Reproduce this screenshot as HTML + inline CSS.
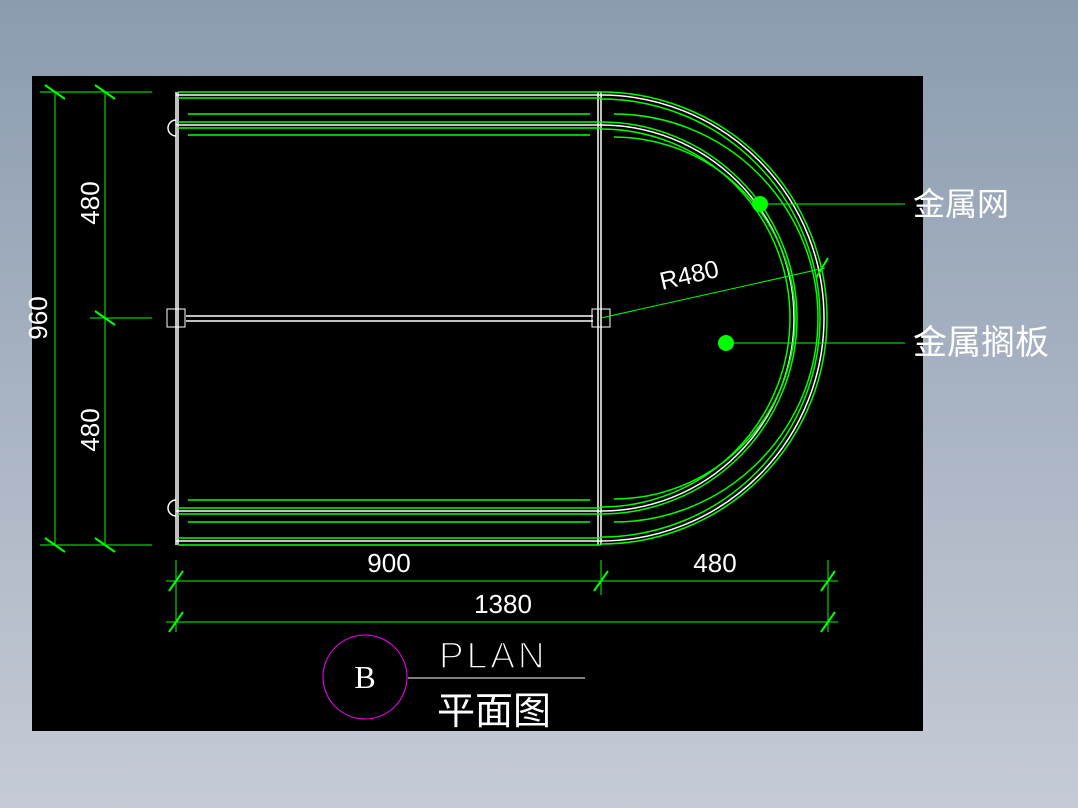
<!DOCTYPE html><html><head><style>body{margin:0;width:1078px;height:808px;background:linear-gradient(#8b9caf,#c6cbd6);overflow:hidden}svg{position:absolute;left:0;top:0}</style></head><body>
<svg width="1078" height="808" font-family="Liberation Sans, Noto Sans CJK SC, sans-serif">
<rect x="32" y="76" width="891" height="655" fill="#000"/>
<g fill="none" stroke-width="1.5">
<g stroke="#fff">
<line x1="176" y1="92" x2="176" y2="545"/><line x1="178" y1="92" x2="178" y2="545"/>
<line x1="598" y1="92" x2="598" y2="545"/><line x1="601" y1="92" x2="601" y2="545"/>
<line x1="176" y1="95" x2="601" y2="95"/><line x1="176" y1="125" x2="601" y2="125"/>
<line x1="176" y1="541" x2="601" y2="541"/><line x1="176" y1="511" x2="601" y2="511"/>
<line x1="186" y1="316" x2="593" y2="316"/><line x1="186" y1="321" x2="593" y2="321"/>
<path d="M176 120 A8 8 0 0 0 176 136"/><path d="M176 500 A8 8 0 0 0 176 516"/>
<rect x="167" y="309" width="18" height="18" stroke-width="1"/><rect x="592" y="309" width="18" height="18" stroke-width="1"/>
</g>
<g stroke="#0f0">
<line x1="178" y1="92" x2="601" y2="92"/><line x1="178" y1="98" x2="601" y2="98"/>
<line x1="178" y1="122" x2="601" y2="122"/><line x1="178" y1="128" x2="601" y2="128"/>
<line x1="188" y1="114" x2="590" y2="114"/><line x1="188" y1="135" x2="590" y2="135"/>
<line x1="178" y1="545" x2="601" y2="545"/><line x1="178" y1="538" x2="601" y2="538"/>
<line x1="178" y1="514" x2="601" y2="514"/><line x1="178" y1="508" x2="601" y2="508"/>
<line x1="188" y1="500" x2="590" y2="500"/><line x1="188" y1="522" x2="590" y2="522"/>
</g>
<path stroke="#0f0" d="M601 92 A226 226 0 0 1 601 544"/>
<path stroke="#fff" d="M601 95 A223 223 0 0 1 601 541"/>
<path stroke="#0f0" d="M601 99 A219 219 0 0 1 601 537"/>
<path stroke="#0f0" d="M614 114 A204 204 0 0 1 614 522"/>
<path stroke="#0f0" d="M601 122 A196 196 0 0 1 601 514"/>
<path stroke="#fff" d="M601 125 A193 193 0 0 1 601 511"/>
<path stroke="#0f0" d="M601 129 A189 189 0 0 1 601 507"/>
<path stroke="#0f0" d="M614 137 A181 181 0 0 1 614 499"/>
<g stroke="#0f0" stroke-width="1">
<line x1="601" y1="318" x2="825" y2="268"/><line x1="816" y1="278" x2="828" y2="258" stroke-width="2"/>
<line x1="760" y1="204" x2="905" y2="204"/><line x1="726" y1="343" x2="905" y2="343"/>
<line x1="55" y1="92" x2="55" y2="545"/><line x1="105" y1="92" x2="105" y2="545"/>
<line x1="40" y1="92" x2="152" y2="92"/><line x1="90" y1="318" x2="152" y2="318"/><line x1="40" y1="545" x2="152" y2="545"/>
<line x1="176" y1="560" x2="176" y2="632"/><line x1="601" y1="560" x2="601" y2="595"/><line x1="828" y1="560" x2="828" y2="632"/>
<line x1="166" y1="581" x2="838" y2="581"/><line x1="166" y1="622" x2="838" y2="622"/>
</g>
<g stroke="#0f0" stroke-width="2">
<line x1="45" y1="85" x2="65" y2="99"/><line x1="95" y1="85" x2="115" y2="99"/>
<line x1="95" y1="311" x2="115" y2="325"/>
<line x1="45" y1="538" x2="65" y2="552"/><line x1="95" y1="538" x2="115" y2="552"/>
<line x1="169" y1="591" x2="183" y2="571"/><line x1="594" y1="591" x2="608" y2="571"/><line x1="821" y1="591" x2="835" y2="571"/>
<line x1="169" y1="632" x2="183" y2="612"/><line x1="821" y1="632" x2="835" y2="612"/>
</g>
<circle cx="365" cy="677" r="42" stroke="#f0f" stroke-width="1"/>
<line x1="408" y1="678" x2="585" y2="678" stroke="#fff" stroke-width="1"/>
</g>
<circle cx="760" cy="204" r="8" fill="#0f0"/><circle cx="726" cy="343" r="8" fill="#0f0"/>
<g fill="#fff" font-size="26">
<text x="389" y="572" text-anchor="middle">900</text>
<text x="715" y="572" text-anchor="middle">480</text>
<text x="503" y="613" text-anchor="middle">1380</text>
<text transform="translate(99,203) rotate(-90)" text-anchor="middle">480</text>
<text transform="translate(99,430) rotate(-90)" text-anchor="middle">480</text>
<text transform="translate(47,318) rotate(-90)" text-anchor="middle">960</text>
<text transform="translate(662,290) rotate(-13)" font-size="25">R480</text>
<text x="913" y="215" font-size="32">金属网</text>
<text x="913" y="354" font-size="34">金属搁板</text>
<text x="439" y="668" font-size="37" letter-spacing="3" stroke="#000" stroke-width="1.6">PLAN</text>
<text x="437" y="724" font-size="38">平面图</text>
<text x="365" y="688" text-anchor="middle" font-family="Liberation Serif, serif" font-size="32">B</text>
</g>
</svg></body></html>
